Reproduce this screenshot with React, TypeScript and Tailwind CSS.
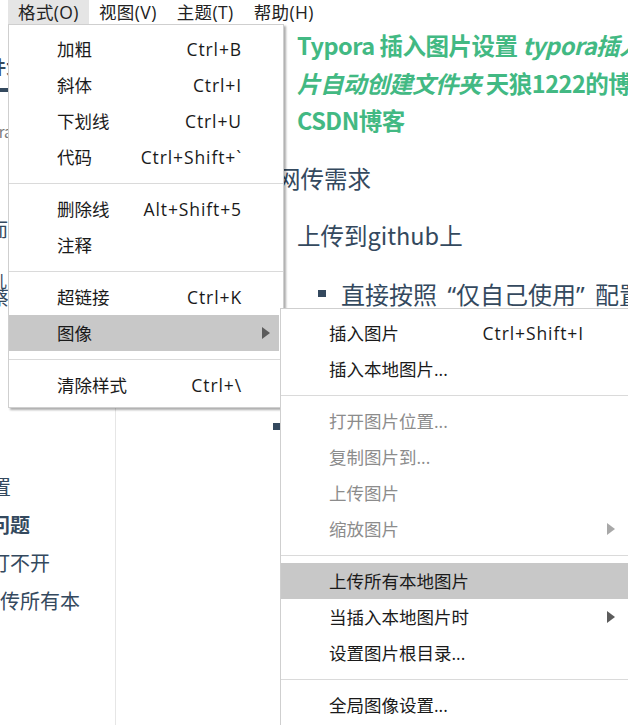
import React from "react";

type Item =
  | { sep: true }
  | { label: string; sc?: string; arrow?: boolean; active?: boolean; disabled?: boolean };

function Arrow({ disabled }: { disabled?: boolean }) {
  return (
    <svg
      width="8"
      height="12"
      viewBox="0 0 8 12"
      className={disabled ? "fill-[#a8a8a8]" : "fill-[#5c5c5c]"}
    >
      <path d="M0 0 L8 6 L0 12 Z" />
    </svg>
  );
}

function Menu({
  items,
  grid,
  arrowPad,
  className,
}: {
  items: Item[];
  grid: string;
  arrowPad: string;
  className: string;
}) {
  return (
    <div className={className}>
      {items.map((it, i) =>
        "sep" in it ? (
          <div key={i} className="h-4 flex items-center">
            <div className="h-px w-full bg-[#dadada]" />
          </div>
        ) : (
          <div
            key={i}
            className={`grid ${grid} items-center h-9 mr-[4px] ${
              it.active ? "bg-[#c8c8c8]" : ""
            } ${it.disabled ? "text-[#8c8c8c]" : "text-[#1a1a1a]"}`}
          >
            <span className="pl-[48px] whitespace-nowrap">{it.label}</span>
            <span className="whitespace-nowrap text-right tracking-[0.9px]">{it.sc ?? ""}</span>
            <span className={`flex justify-end ${arrowPad}`}>
              {it.arrow ? <Arrow disabled={it.disabled} /> : null}
            </span>
          </div>
        )
      )}
    </div>
  );
}

const formatItems: Item[] = [
  { label: "加粗", sc: "Ctrl+B" },
  { label: "斜体", sc: "Ctrl+I" },
  { label: "下划线", sc: "Ctrl+U" },
  { label: "代码", sc: "Ctrl+Shift+`" },
  { sep: true },
  { label: "删除线", sc: "Alt+Shift+5" },
  { label: "注释" },
  { sep: true },
  { label: "超链接", sc: "Ctrl+K" },
  { label: "图像", arrow: true, active: true },
  { sep: true },
  { label: "清除样式", sc: "Ctrl+\\" },
];

const imageItems: Item[] = [
  { label: "插入图片", sc: "Ctrl+Shift+I" },
  { label: "插入本地图片..." },
  { sep: true },
  { label: "打开图片位置...", disabled: true },
  { label: "复制图片到...", disabled: true },
  { label: "上传图片", disabled: true },
  { label: "缩放图片", disabled: true, arrow: true },
  { sep: true },
  { label: "上传所有本地图片", active: true },
  { label: "当插入本地图片时", arrow: true },
  { label: "设置图片根目录..." },
  { sep: true },
  { label: "全局图像设置..." },
];

function Bullet({ className }: { className: string }) {
  return <span className={`absolute bg-[#34495e] ${className}`} />;
}

export default function App() {
  return (
    <div className="relative w-[628px] h-[725px] overflow-hidden bg-white">
      <div className="flex flex-col h-full">
        {/* Menu bar */}
        <div className="h-6 shrink-0 flex items-stretch pl-[8px] text-[17.5px] text-[#222] font-['Open_Sans','Noto_Sans_CJK_SC',sans-serif]">
          {["格式(O)", "视图(V)", "主题(T)", "帮助(H)"].map((t, i) => (
            <div
              key={t}
              className={`px-[10px] flex items-center whitespace-nowrap tracking-[0.4px] ${
                i === 0 ? "bg-[#e5e5e5]" : ""
              }`}
            >
              {t}
            </div>
          ))}
        </div>

        <div className="flex flex-1 min-h-0">
          {/* Sidebar */}
          <aside className="w-[116px] shrink-0 border-r border-[#e6e6e6] overflow-hidden flex flex-col text-[#34495e] font-['Noto_Sans_CJK_SC',sans-serif]">
            <div className="mt-[30px] h-[24px] leading-[24px] text-[18px] font-bold -ml-[30px] whitespace-nowrap">
              文件大纲
            </div>
            <div className="mt-[10px] h-[4px] w-[44px] bg-[#34495e]" />
            <div className="mt-[30px] h-[20px] leading-[20px] text-[15px] text-[#7a7a7a] -ml-[36px] whitespace-nowrap">
              Typora
            </div>
            <div className="mt-[75px] h-[24px] leading-[24px] text-[19px] -ml-[11px] whitespace-nowrap">
              而
            </div>
            <div className="mt-[32px] h-[14px] leading-[14px] text-[16px] -ml-[9px] whitespace-nowrap">
              儿
            </div>
            <div className="h-[20px] leading-[20px] text-[19px] -ml-[10px] whitespace-nowrap">
              蔡
            </div>
            <div className="mt-[161px] text-[20px] leading-[38px] whitespace-nowrap">
              <div className="-ml-[29px]">设置</div>
              <div className="-ml-[10px] font-bold">问题</div>
              <div className="-ml-[10px]">打不开</div>
              <div className="-ml-[20px]">上传所有本</div>
            </div>
          </aside>

          {/* Main content */}
          <main className="flex-1 min-w-0 overflow-hidden pt-[3px] pl-[181px] text-[23.5px] leading-[37.5px] text-[#34495e] font-['Noto_Sans_CJK_SC',sans-serif]">
            <div className="relative whitespace-nowrap font-bold text-[#42b983] tracking-[-0.5px]">
              <Bullet className="left-[-23px] top-[15px] w-[7px] h-[7px]" />
              Typora 插入图片设置 <em>typora插入图</em>
              <br />
              <em>片自动创建文件夹</em> 天狼1222的博客-
              <br />
              CSDN博客
            </div>
            <div className="mt-[20px] -ml-[20px] whitespace-nowrap">网传需求</div>
            <div className="relative mt-[20px] whitespace-nowrap">
              <Bullet className="left-[-23px] top-[15px] w-[7px] h-[7px]" />
              上传到github上
            </div>
            <div className="relative mt-[20px] ml-[44px] whitespace-nowrap text-[24px]">
              <Bullet className="left-[-23px] top-[15px] w-[8px] h-[7px]" />
              直接按照
              <span className="inline-block w-[19px] text-right font-['Noto_Sans',sans-serif]">“</span>
              仅自己使用
              <span className="inline-block w-[19px] text-left font-['Noto_Sans',sans-serif]">”</span>
              配置进行
            </div>
            <div className="relative mt-[95px] whitespace-nowrap">
              <Bullet className="left-[-24px] top-[15px] w-[7px] h-[7px]" />
              上传到gitee上
            </div>
          </main>
        </div>
      </div>

      {/* Format menu */}
      <Menu
        items={formatItems}
        grid="grid-cols-[1fr_auto_37px]"
        arrowPad="pr-[9px]"
        className="absolute left-[8px] top-[24px] w-[276px] bg-white border border-[#cfcfcf] pt-[6px] pb-[4px] shadow-[2px_2px_2px_rgba(0,0,0,0.32)] text-[17.5px] font-['Open_Sans','Noto_Sans_CJK_SC',sans-serif]"
      />

      {/* Image submenu */}
      <Menu
        items={imageItems}
        grid="grid-cols-[1fr_auto_51px]"
        arrowPad="pr-[20px]"
        className="absolute left-[280px] top-[308px] w-[360px] bg-white border border-[#cfcfcf] pt-[6px] pb-[4px] shadow-[2px_2px_2px_rgba(0,0,0,0.32)] text-[17.5px] font-['Open_Sans','Noto_Sans_CJK_SC',sans-serif]"
      />
    </div>
  );
}
